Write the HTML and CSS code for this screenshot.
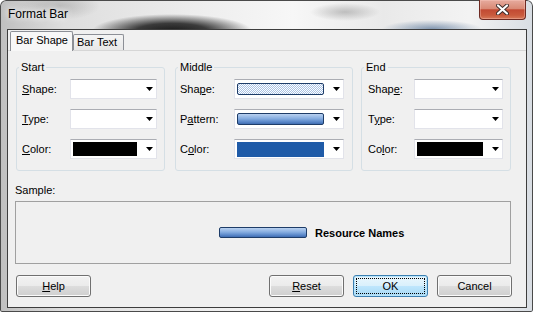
FILE: index.html
```html
<!DOCTYPE html>
<html lang="en">
<head>
    <meta charset="UTF-8">
    <title>Format Bar</title>
    <link rel="stylesheet" href="styles.css">
</head>
<body>
    <div class="window">
        <div class="titlebar">
            <span class="title">Format Bar</span>
            <button class="close" aria-label="Close">
                <svg width="13" height="11" viewBox="0 0 13 11">
                    <path d="M2 1.5 L11 9.5 M11 1.5 L2 9.5" stroke="#3a2a28" stroke-width="4" stroke-linecap="round"/>
                    <path d="M2 1.5 L11 9.5 M11 1.5 L2 9.5" stroke="#fff" stroke-width="2.2" stroke-linecap="round"/>
                </svg>
            </button>
        </div>

        <div class="client">
            <div class="tabs">
                <div class="tab active">Bar Shape</div>
                <div class="tab">Bar Text</div>
            </div>

            <div class="panel">
                <div class="groups">
                    <fieldset class="group group-start">
                        <legend>Start</legend>
                        <div class="row">
                            <label><u>S</u>hape:</label>
                            <div class="combo"><span class="value"></span><span class="arrow"></span></div>
                        </div>
                        <div class="row">
                            <label><u>T</u>ype:</label>
                            <div class="combo"><span class="value"></span><span class="arrow"></span></div>
                        </div>
                        <div class="row">
                            <label><u>C</u>olor:</label>
                            <div class="combo"><span class="value swatch black"></span><span class="arrow"></span></div>
                        </div>
                    </fieldset>

                    <fieldset class="group group-middle">
                        <legend>Middle</legend>
                        <div class="row">
                            <label>Sha<u>p</u>e:</label>
                            <div class="combo"><span class="value"><span class="bar-dots"></span></span><span class="arrow"></span></div>
                        </div>
                        <div class="row">
                            <label>P<u>a</u>ttern:</label>
                            <div class="combo"><span class="value"><span class="bar-fill"></span></span><span class="arrow"></span></div>
                        </div>
                        <div class="row">
                            <label>C<u>o</u>lor:</label>
                            <div class="combo"><span class="value swatch blue"></span><span class="arrow"></span></div>
                        </div>
                    </fieldset>

                    <fieldset class="group group-end">
                        <legend>End</legend>
                        <div class="row">
                            <label>Shap<u>e</u>:</label>
                            <div class="combo"><span class="value"></span><span class="arrow"></span></div>
                        </div>
                        <div class="row">
                            <label>T<u>y</u>pe:</label>
                            <div class="combo"><span class="value"></span><span class="arrow"></span></div>
                        </div>
                        <div class="row">
                            <label>Co<u>l</u>or:</label>
                            <div class="combo"><span class="value swatch black"></span><span class="arrow"></span></div>
                        </div>
                    </fieldset>
                </div>

                <div class="sample-label">Sample:</div>
                <div class="sample">
                    <span class="bar-fill sample-bar"></span>
                    <span class="sample-text">Resource Names</span>
                </div>

                <div class="buttons">
                    <button class="btn"><u>H</u>elp</button>
                    <span class="spacer"></span>
                    <button class="btn"><u>R</u>eset</button>
                    <button class="btn default">OK</button>
                    <button class="btn">Cancel</button>
                </div>
            </div>
        </div>
    </div>
</body>
</html>
```

FILE: styles.css
```css
body {
    margin: 0;
    font-family: "Liberation Sans", Arial, sans-serif;
    font-size: 11px;
    color: #000;
    overflow: hidden;
}

/* window frame (aero glass) */
.window {
    width: 533px;
    height: 312px;
    box-sizing: border-box;
    padding: 0 6px 4px 7px;
    border-radius: 6px 6px 2px 2px;
    box-shadow: inset 0 0 0 1px #4a4a4a;
    background:
        radial-gradient(ellipse 80px 17px at 172px 31px, rgba(15,15,15,.95), rgba(15,15,15,.8) 45%, rgba(15,15,15,0)),
        radial-gradient(ellipse 50px 9px at 432px 29px, rgba(110,135,165,.85), rgba(110,135,165,0)),
        radial-gradient(ellipse 35px 9px at 345px 12px, rgba(140,140,140,.5), rgba(140,140,140,0)),
        radial-gradient(ellipse 40px 14px at 60px 6px, rgba(150,150,150,.5), rgba(150,150,150,0)),
        linear-gradient(90deg, #bfbfbf, #dedede 12%, #ececec 35%, #f7f7f7 55%, #e9e9e9 72%, #f3f3f3 88%, #d8dde3);
}

.titlebar {
    height: 29px;
    display: flex;
    justify-content: space-between;
    align-items: flex-start;
}

.title {
    margin: 7px 0 0 1px;
    font-size: 12px;
    line-height: 14px;
    text-shadow: 0 0 6px #fff, 0 0 10px #fff;
}

.close {
    width: 47px;
    height: 20px;
    margin: 0 1px 0 0;
    padding: 0;
    border: 1px solid #6e2a22;
    border-top: none;
    border-radius: 0 0 4px 4px;
    background: linear-gradient(#e6ab9e 0%, #d98a76 45%, #c24a33 52%, #c95a3d 80%, #d77a5a 100%);
    box-shadow: inset 0 0 0 1px rgba(255,210,200,.35);
    display: flex;
    align-items: center;
    justify-content: center;
}

/* dialog client area */
.client {
    height: 279px;
    box-sizing: border-box;
    border: 1px solid #3d3d3d;
    background: #f0f0f0;
    display: flex;
    flex-direction: column;
}

.tabs {
    height: 20px;
    box-sizing: border-box;
    padding: 1px 0 0 2px;
    display: flex;
    align-items: flex-end;
}

.tab {
    width: 51px;
    height: 16px;
    box-sizing: border-box;
    padding: 0 0 0 3px;
    border: 1px solid #8c8f96;
    border-bottom: none;
    border-radius: 2px 2px 0 0;
    background: linear-gradient(#f4f4f4, #e8e8e8);
    line-height: 15px;
    white-space: nowrap;
    overflow: hidden;
}

.tab.active {
    width: 63px;
    height: 20px;
    margin-bottom: -1px;
    padding-left: 5px;
    position: relative;
    background: #f7f7f7;
    line-height: 17px;
}

.panel {
    flex: 1;
    border-top: 1px solid #d6d6d6;
    padding: 0 15px 0 7px;
    display: flex;
    flex-direction: column;
}

.groups {
    display: flex;
    margin: 10px 0 0 1px;
    gap: 10px;
}

.group {
    margin: 0;
    padding: 5px 0 11px 0;
    border: 1px solid #d5dfe5;
    border-radius: 3px;
    min-width: 0;
    box-sizing: border-box;
    display: flex;
    flex-direction: column;
    gap: 10px;
}

.group legend {
    margin-left: 2px;
    padding: 0 2px;
    line-height: 13px;
}

.group-start { width: 149px; }
.group-middle { width: 178px; }
.group-end { width: 150px; margin-left: -2px; }

.row {
    height: 20px;
    display: flex;
    align-items: center;
    justify-content: space-between;
}

.group-start .row { padding: 0 7px 0 5px; }
.group-middle .row { padding: 0 8px 0 4px; }
.group-end .row { padding: 0 7px 0 6px; }

.group-start .combo { width: 87px; }
.group-middle .combo { width: 110px; }
.group-end .combo { width: 89px; }

.combo {
    height: 20px;
    box-sizing: border-box;
    border: 1px solid #e2e3ea;
    border-top-color: #abadb3;
    background: #fff;
    padding: 0 3px 0 2px;
    display: flex;
    align-items: center;
}

.value {
    flex: 1;
    height: 12px;
    margin-right: 9px;
    display: flex;
}

.swatch {
    height: 14px;
}

.black { background: #000; }
.blue { background: #1f5ba8; height: 15px; }

.arrow {
    width: 7px;
    height: 4px;
    background: #000;
    clip-path: polygon(0 0, 100% 0, 50% 100%);
}

.bar-dots,
.bar-fill {
    flex: 1;
    box-sizing: border-box;
    border: 1px solid #1d3c68;
    border-radius: 2px;
}

.bar-dots {
    background: repeating-conic-gradient(#a9c2e4 0 25%, #fff 0 50%) 0 0 / 2px 2px;
}

.bar-fill {
    background: linear-gradient(#b9d1f0, #86ade0 45%, #5e8bcc 75%, #3f6db2);
}

.sample-label {
    margin-top: 13px;
    line-height: 13px;
}

.sample {
    margin-top: 4px;
    height: 63px;
    box-sizing: border-box;
    border: 1px solid #a0a0a0;
    padding-left: 203px;
    display: flex;
    align-items: center;
}

.sample-bar {
    flex: none;
    width: 88px;
    height: 11px;
}

.sample-text {
    margin-left: 8px;
    font-weight: bold;
    font-size: 11px;
}

.buttons {
    margin: 11px -1px 0 1px;
    display: flex;
    gap: 9px;
}

.spacer {
    flex: 1;
}

.btn {
    width: 75px;
    height: 22px;
    padding: 0;
    font-family: inherit;
    font-size: 11px;
    color: #000;
    border: 1px solid #707070;
    border-radius: 3px;
    background: linear-gradient(#f2f2f2 0%, #ebebeb 50%, #dddddd 51%, #cfcfcf 100%);
    box-shadow: inset 0 0 0 1px #fbfbfb;
}

.btn.default {
    border-color: #3c7fb1;
    background: linear-gradient(#eaf6fd 0%, #d9f0fc 50%, #bee6fd 51%, #a7d9f5 100%);
    box-shadow: inset 0 0 0 1px #b8e4fa;
    outline: 1px dotted #000;
    outline-offset: -4px;
}
```
